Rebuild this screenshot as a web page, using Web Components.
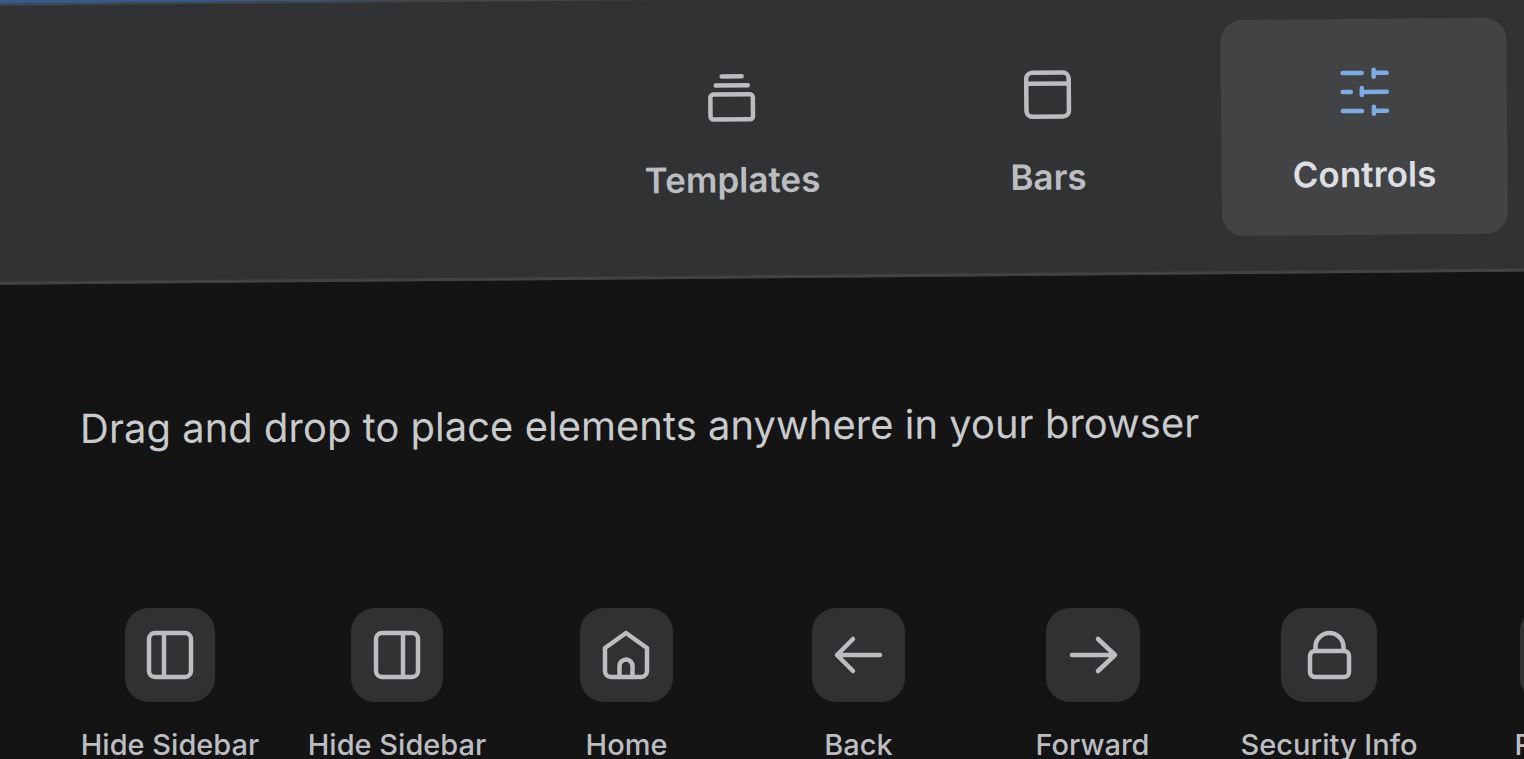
<!DOCTYPE html>
<html lang="en">
<head>
  <meta charset="UTF-8">
  <title>Customize Toolbar</title>
  <style>
    html, body {
      margin: 0;
      height: 100%;
      overflow: hidden;
    }
    body {
      background: #141415;
      font-family: Inter, sans-serif;
    }
  </style>
</head>
<body>
  <customize-panel>
    <panel-tabs slot="tabs">
      <panel-tab icon="templates">Templates</panel-tab>
      <panel-tab icon="bars">Bars</panel-tab>
      <panel-tab icon="controls" active>Controls</panel-tab>
    </panel-tabs>
    <span slot="hint">Drag and drop to place elements anywhere in your browser</span>
    <control-item icon="sidebar-left">Hide Sidebar</control-item>
    <control-item icon="sidebar-right">Hide Sidebar</control-item>
    <control-item icon="home">Home</control-item>
    <control-item icon="back">Back</control-item>
    <control-item icon="forward">Forward</control-item>
    <control-item icon="lock">Security Info</control-item>
    <control-item icon="reload">Refresh</control-item>
  </customize-panel>

  <script>
    const icons = {
      templates: '<path d="M14 3h20M8 12h32"/><rect x="2.5" y="21" width="42.5" height="25" rx="3"/>',
      bars: '<rect x="2.5" y="2" width="42.5" height="44" rx="6"/><path d="M3 13h42"/>',
      controls: '<path d="M3 5h19M35 5h12M34 2v7M3 24h8M22 24h25M22 20v7M3 43h19M35 43h12M34 39v7"/>',
      'sidebar-left': '<rect x="3" y="2" width="42" height="44" rx="6"/><path d="M18 2v44"/>',
      'sidebar-right': '<rect x="3" y="2" width="42" height="44" rx="6"/><path d="M30 2v44"/>',
      home: '<path d="M3 17L24 2l21 15v23a6 6 0 0 1-6 6H9a6 6 0 0 1-6-6z"/><path d="M17.500 46V35a6.500 6.500 0 0 1 13 0v11"/>',
      back: '<path d="M45 24H2M18 8L2 24l16 16"/>',
      forward: '<path d="M3 24h43M29 8l17 16-17 16"/>',
      lock: '<rect x="5" y="20" width="39" height="26" rx="5"/><path d="M10.500 20v-4a13.500 13.500 0 0 1 28 0v4"/>',
      reload: '<path d="M42 14A20 20 0 1 0 44 28M44 4v12H32"/>'
    };

    function drawIcon(name) {
      return `<svg viewBox="0 0 48 48" width="48" height="48" aria-hidden="true">${icons[name]}</svg>`;
    }

    class CustomizePanel extends HTMLElement {
      static styles = `
        <style>
          :host {
            display: block;
            min-height: 100%;
            overflow: hidden;
          }
          header {
            background: #36598f;
            padding-top: 4px;
          }
          p {
            margin: 119px 80px 0;
            font-size: 40px;
            line-height: 50px;
            color: #c8cacc;
            white-space: nowrap;
            transform: rotate(-0.3deg);
            transform-origin: 0 50%;
          }
          /* columns widen towards the right edge, following the tilt */
          .controls {
            display: grid;
            grid-template-columns: 226px 228px 231px 233px 235px 238px 240px;
            margin: 154px 0 0 57px;
          }
        </style>
      `;

      constructor() {
        super();
        this.attachShadow({ mode: 'open' });
      }

      connectedCallback() {
        this.shadowRoot.innerHTML = `
          ${CustomizePanel.styles}
          <header><slot name="tabs"></slot></header>
          <main>
            <p><slot name="hint"></slot></p>
            <div class="controls"><slot></slot></div>
          </main>
        `;
      }
    }

    class PanelTabs extends HTMLElement {
      static styles = `
        <style>
          :host {
            display: block;
            background: #141415;
          }
          /* bleeds past both sides so the tilt leaves no gap */
          nav {
            display: flex;
            justify-content: flex-end;
            gap: 30px;
            margin: 0 -20px;
            padding: 25px 38px 35px;
            background: #313234;
            border-top: 2px solid #444649;
            border-bottom: 3px solid #424345;
            transform: rotate(-0.5deg);
            transform-origin: 0 0;
          }
        </style>
      `;

      constructor() {
        super();
        this.attachShadow({ mode: 'open' });
      }

      connectedCallback() {
        this.shadowRoot.innerHTML = `
          ${PanelTabs.styles}
          <nav><slot></slot></nav>
        `;
      }
    }

    class PanelTab extends HTMLElement {
      static styles = `
        <style>
          :host {
            display: block;
            width: 286px;
          }
          button {
            display: flex;
            flex-direction: column;
            align-items: center;
            gap: 36px;
            width: 100%;
            height: 216px;
            padding: 49px 0 0;
            border: none;
            border-radius: 22px;
            background: none;
            color: #bbbdc1;
            font: 600 35px/44px Inter, sans-serif;
            cursor: pointer;
          }
          svg {
            overflow: visible;
            fill: none;
            stroke: currentColor;
            stroke-width: 4.5;
            stroke-linecap: round;
            stroke-linejoin: round;
          }
          :host([active]) button {
            background: #424345;
            color: #dcdee1;
          }
          :host([active]) svg {
            stroke: #7dabe4;
          }
        </style>
      `;

      constructor() {
        super();
        this.attachShadow({ mode: 'open' });
      }

      connectedCallback() {
        this.shadowRoot.innerHTML = `
          ${PanelTab.styles}
          <button type="button" aria-pressed="${this.hasAttribute('active')}">
            ${drawIcon(this.getAttribute('icon'))}
            <span><slot></slot></span>
          </button>
        `;
      }
    }

    class ControlItem extends HTMLElement {
      static styles = `
        <style>
          :host {
            display: block;
          }
          button {
            display: flex;
            flex-direction: column;
            align-items: center;
            gap: 25px;
            width: 100%;
            padding: 0;
            border: none;
            background: none;
            color: #bbbdc1;
            font: 500 29px/36px Inter, sans-serif;
            white-space: nowrap;
            cursor: grab;
          }
          .tile {
            display: grid;
            place-items: center;
            width: 40%;
            height: 94px;
            border-radius: 24px;
            background: #303133;
          }
          svg {
            overflow: visible;
            fill: none;
            stroke: currentColor;
            stroke-width: 4.5;
            stroke-linecap: round;
            stroke-linejoin: round;
          }
        </style>
      `;

      constructor() {
        super();
        this.attachShadow({ mode: 'open' });
      }

      connectedCallback() {
        this.shadowRoot.innerHTML = `
          ${ControlItem.styles}
          <button type="button">
            <span class="tile">${drawIcon(this.getAttribute('icon'))}</span>
            <span><slot></slot></span>
          </button>
        `;
      }
    }

    customElements.define('customize-panel', CustomizePanel);
    customElements.define('panel-tabs', PanelTabs);
    customElements.define('panel-tab', PanelTab);
    customElements.define('control-item', ControlItem);
  </script>
</body>
</html>
